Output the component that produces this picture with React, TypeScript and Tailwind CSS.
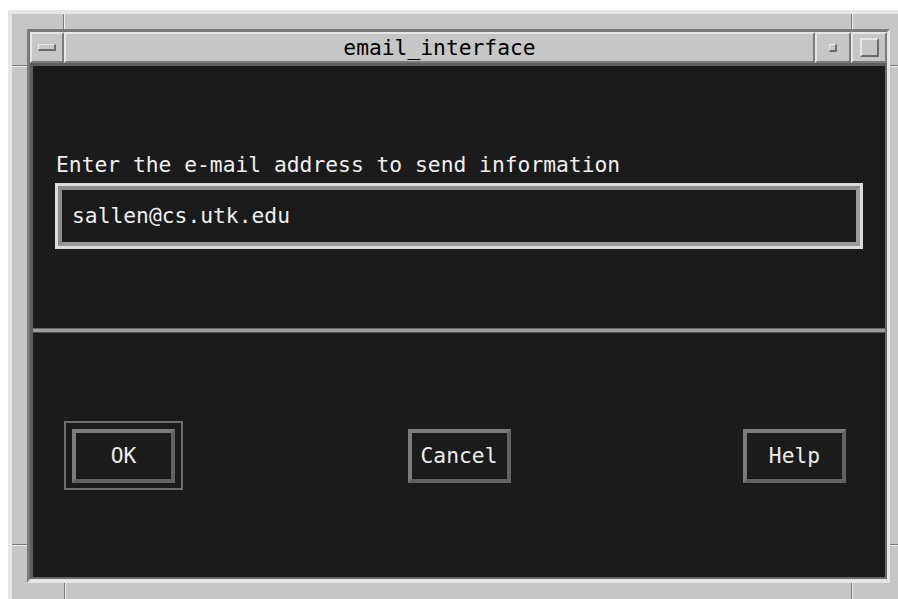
import React from 'react';

const light = 'border-[#e6e6e6]';

// Small raised bevel button used in the title bar
function TitleButton({ width, children }: { width: string; children?: React.ReactNode }) {
  return (
    <div
      className={`${width} h-full flex items-center justify-center border-t-2 border-l-2 border-t-[#e6e6e6] border-l-[#e6e6e6] border-b-2 border-r-2 border-b-[#7a7a7a] border-r-[#7a7a7a]`}
    >
      {children}
    </div>
  );
}

function TitleBar() {
  return (
    <div className="flex h-[31px] bg-[#c6c6c6] shrink-0">
      <TitleButton width="w-[34px]">
        <div className="w-[18px] h-[7px] border-t border-l border-[#e6e6e6] border-b-2 border-r-2 border-b-[#6a6a6a] border-r-[#6a6a6a]" />
      </TitleButton>
      <TitleButton width="flex-1">
        <span className="text-[21.3px] leading-[24px] text-black">email_interface</span>
      </TitleButton>
      <TitleButton width="w-[36px]">
        <div className="w-[8px] h-[8px] border-t border-l border-[#e6e6e6] border-b-2 border-r-2 border-b-[#6a6a6a] border-r-[#6a6a6a]" />
      </TitleButton>
      <TitleButton width="w-[36px]">
        <div className="w-[19px] h-[19px] border-t-2 border-l-2 border-[#e6e6e6] border-b-2 border-r-2 border-b-[#6a6a6a] border-r-[#6a6a6a]" />
      </TitleButton>
    </div>
  );
}

function PushButton({ label, isDefault }: { label: string; isDefault?: boolean }) {
  return (
    <div
      className={`w-[119px] h-[69px] flex items-center justify-center border-2 ${
        isDefault ? 'border-[#6e6e6e]' : 'border-transparent'
      }`}
    >
      <button className="w-[103px] h-[54px] flex items-center justify-center border-4 border-t-[#7c7c7c] border-l-[#7c7c7c] border-b-[#626262] border-r-[#626262] text-[21.3px] leading-[24px] text-[#ececec]">
        {label}
      </button>
    </div>
  );
}

// Corner notches of the resize frame
function ResizeNotches() {
  const v = 'absolute w-[2px] border-l border-l-[#7a7a7a] border-r border-r-[#ececec]';
  const h = 'absolute h-[2px] border-t border-t-[#7a7a7a] border-b border-b-[#ececec]';
  return (
    <>
      <div className={`${v} left-[51px] -top-[4px] h-[19px]`} />
      <div className={`${v} left-[839px] -top-[4px] h-[19px]`} />
      <div className={`${v} left-[52px] top-[569px] h-[20px]`} />
      <div className={`${v} left-[839px] top-[569px] h-[20px]`} />
      <div className={`${h} -left-[4px] top-[51px] w-[19px]`} />
      <div className={`${h} left-[878px] top-[51px] w-[8px]`} />
      <div className={`${h} -left-[4px] top-[530px] w-[19px]`} />
      <div className={`${h} left-[878px] top-[530px] w-[8px]`} />
    </>
  );
}

export default function App() {
  return (
    <div className="w-[898px] h-[599px] overflow-hidden bg-white pl-[8px] pt-[10px] font-['DejaVu_Sans_Mono','Liberation_Mono',monospace]">
      <div className={`relative w-[890px] h-[589px] overflow-hidden bg-[#c6c6c6] border-t-4 border-l-4 ${light} pl-[15px] pt-[15px]`}>
        <ResizeNotches />

        <div className="flex flex-col w-[863px] h-[554px] border-t-[3px] border-l-[3px] border-t-[#7a7a7a] border-l-[#7a7a7a] border-r-[3px] border-b-4 border-r-[#e6e6e6] border-b-[#e6e6e6]">
          <TitleBar />

          <div className="flex-1 flex flex-col bg-[#1b1b1b] border-t-[3px] border-l-[3px] border-t-[#5e5e5e] border-l-[#5e5e5e] border-r-2 border-b-2 border-r-[#6a6a6a] border-b-[#6a6a6a]">
            <div className="px-[22px] pt-[87px]">
              <div className="pl-[1px] text-[21.3px] leading-[24px] text-[#efefef]">
                Enter the e-mail address to send information
              </div>
              <div className="mt-[6px] h-[66px] border-[3px] border-[#dcdcdc]">
                <div className="h-full flex items-center pl-[10px] border-4 border-t-[#8c8c8c] border-l-[#8c8c8c] border-b-[#9a9a9a] border-r-[#9a9a9a] text-[21.3px] leading-[24px] text-[#efefef]">
                  sallen@cs.utk.edu
                </div>
              </div>
            </div>

            <div className="mt-[79px] h-[5px] bg-[#9e9e9e] border-t border-b border-t-[#6a6a6a] border-b-[#505050]" />

            <div className="mt-[88px] px-[31px] flex justify-between">
              <PushButton label="OK" isDefault />
              <PushButton label="Cancel" />
              <PushButton label="Help" />
            </div>
          </div>
        </div>
      </div>
    </div>
  );
}
